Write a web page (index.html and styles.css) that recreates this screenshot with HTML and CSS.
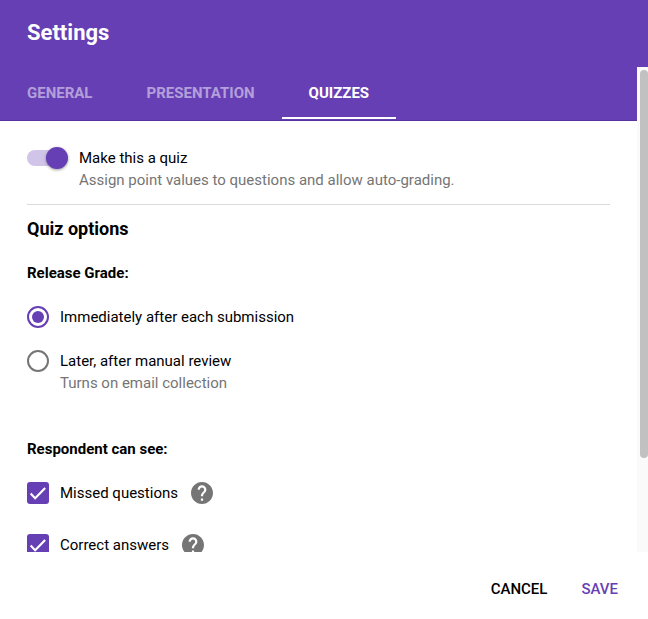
FILE: index.html
```
<!DOCTYPE html>
<html lang="en">

<head>
    <meta charset="utf-8" />
    <meta name="viewport" content="width=device-width, initial-scale=1" />
    <title>Settings</title>
    <link rel="stylesheet" href="styles.css">
</head>

<body>
    <form class="dialog">
        <h1 class="title">Settings</h1>
        <div class="main">
            <div class="scroller">
                <div class="tabs" role="tablist">
                    <button type="button" class="tab" role="tab">GENERAL</button>
                    <button type="button" class="tab" role="tab">PRESENTATION</button>
                    <button type="button" class="tab active" role="tab" aria-selected="true">QUIZZES</button>
                </div>
                <div class="panel">
                    <div class="row quiz">
                        <input type="checkbox" class="switch" id="isQuiz" checked>
                        <label for="isQuiz">Make this a quiz
                            <span class="note">Assign point values to questions and allow auto-grading.</span>
                        </label>
                    </div>
                    <h2>Quiz options</h2>
                    <h3>Release Grade:</h3>
                    <div class="row">
                        <input type="radio" class="radio" name="release" id="immediately" checked>
                        <label for="immediately">Immediately after each submission</label>
                    </div>
                    <div class="row">
                        <input type="radio" class="radio" name="release" id="later">
                        <label for="later">Later, after manual review
                            <span class="note">Turns on email collection</span>
                        </label>
                    </div>
                    <h3 class="respondent">Respondent can see:</h3>
                    <div class="row option">
                        <input type="checkbox" class="check" id="missed" checked>
                        <label for="missed">Missed questions</label>
                        <svg class="help" viewBox="2 2 20 20" aria-hidden="true">
                            <path d="M12 2C6.48 2 2 6.48 2 12s4.48 10 10 10 10-4.48 10-10S17.52 2 12 2zm1 17h-2v-2h2v2zm2.07-7.75l-.9.92C13.45 12.9 13 13.5 13 15h-2v-.5c0-1.1.45-2.1 1.17-2.83l1.24-1.26c.37-.36.59-.86.59-1.41 0-1.1-.9-2-2-2s-2 .9-2 2H8c0-2.21 1.79-4 4-4s4 1.79 4 4c0 .88-.36 1.68-.93 2.25z" />
                        </svg>
                    </div>
                    <div class="row option">
                        <input type="checkbox" class="check" id="correct" checked>
                        <label for="correct">Correct answers</label>
                        <svg class="help" viewBox="2 2 20 20" aria-hidden="true">
                            <path d="M12 2C6.48 2 2 6.48 2 12s4.48 10 10 10 10-4.48 10-10S17.52 2 12 2zm1 17h-2v-2h2v2zm2.07-7.75l-.9.92C13.45 12.9 13 13.5 13 15h-2v-.5c0-1.1.45-2.1 1.17-2.83l1.24-1.26c.37-.36.59-.86.59-1.41 0-1.1-.9-2-2-2s-2 .9-2 2H8c0-2.21 1.79-4 4-4s4 1.79 4 4c0 .88-.36 1.68-.93 2.25z" />
                        </svg>
                    </div>
                </div>
            </div>
            <div class="scrollbar">
                <div class="thumb"></div>
            </div>
        </div>
        <div class="actions">
            <button type="button" class="action">CANCEL</button>
            <button type="submit" class="action save">SAVE</button>
        </div>
    </form>
</body>

</html>
```
FILE: styles.css
```
* {
    box-sizing: border-box;
}

body {
    margin: 0;
    font-family: Roboto, "Liberation Sans", sans-serif;
    font-size: 15px;
    line-height: 22px;
    color: #000;
    background-color: #fff;
}

h1,
h2,
h3 {
    margin: 0;
    font-weight: 700;
}

button {
    border: none;
    background: none;
    font: inherit;
    cursor: pointer;
}

.dialog {
    display: flex;
    flex-direction: column;
    height: 100vh;
}

.title {
    padding: 18px 27px 19px;
    font-size: 22px;
    line-height: 30px;
    color: #fff;
    background-color: #673fb5;
}

.main {
    display: flex;
    flex: 1;
    min-height: 0;
}

.scroller {
    flex: 1;
    overflow: auto;
    scrollbar-width: none;
}

.tabs {
    display: flex;
    height: 54px;
    background-color: #673fb5;
    border-bottom: 1px solid #5732a0;
}

.tab {
    height: 52px;
    padding: 0 27px;
    font-weight: 700;
    color: #b39fda;
    border-top: 2px solid transparent;
    border-bottom: 2px solid transparent;
}

.tab.active {
    color: #fff;
    border-bottom-color: #fff;
}

.panel {
    padding: 26px 27px;
}

.row {
    display: flex;
    align-items: flex-start;
    margin-bottom: 22px;
}

.row input {
    appearance: none;
    flex: none;
    width: 22px;
    height: 22px;
    margin: 0 11px 0 0;
}

.note {
    display: block;
    color: #757575;
}

.quiz {
    margin-bottom: 13px;
    padding-bottom: 13px;
    border-bottom: 1px solid #dadada;
}

.row .switch {
    display: flex;
    align-items: center;
    width: 41px;
}

.switch::before {
    content: "";
    width: 36px;
    height: 16px;
    border-radius: 8px;
    background-color: #d1c4e9;
}

.switch::after {
    content: "";
    width: 22px;
    height: 22px;
    margin-left: -17px;
    border-radius: 50%;
    background-color: #673fb5;
    box-shadow: 0 1px 3px rgba(0, 0, 0, .4);
}

h2 {
    margin-bottom: 22px;
    font-size: 18px;
}

h3 {
    margin-bottom: 22px;
    font-size: 15px;
}

.radio {
    padding: 3px;
    border: 2px solid #757575;
    border-radius: 50%;
}

.radio:checked {
    border-color: #673fb5;
}

.radio:checked::before {
    content: "";
    display: block;
    width: 12px;
    height: 12px;
    border-radius: 50%;
    background-color: #673fb5;
}

.respondent {
    margin-top: 44px;
}

.option {
    margin-bottom: 30px;
}

.check {
    border-radius: 3px;
    background-color: #673fb5;
}

.check::before {
    content: "";
    display: block;
    height: 22px;
    background-color: #fff;
    clip-path: polygon(37% 67%, 20% 49%, 13% 56%, 37% 81%, 86% 31%, 79% 24%);
}

.help {
    width: 22px;
    height: 22px;
    margin-left: 13px;
    fill: #757575;
}

.scrollbar {
    width: 11px;
    padding: 3px 0 3px 3px;
    background-color: #fafafa;
}

.thumb {
    height: 81%;
    border-radius: 4px;
    background-color: #c1c1c1;
}

.actions {
    display: flex;
    justify-content: flex-end;
    gap: 22px;
    padding: 22px 24px 15px;
}

.action {
    padding: 4px 6px;
    font-weight: 500;
}

.save {
    color: #673fb5;
}
```
